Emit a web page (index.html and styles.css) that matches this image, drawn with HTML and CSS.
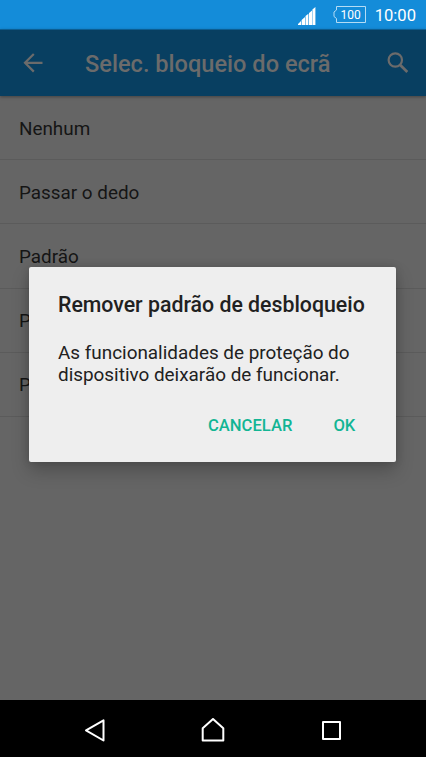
FILE: index.html
```html
<!DOCTYPE html>
<html lang="pt">
<head>
<meta charset="utf-8">
<title>Selec. bloqueio do ecrã</title>
<link rel="stylesheet" href="styles.css">
</head>
<body>
<div class="phone">
  <div class="status">
    <svg class="signal" width="18" height="18" viewBox="0 0 18 18"><path d="M0 18V17L3 14V18zM3.600 18V13L7 10V18zM7.500 18V9L10.400 6.800V18zM11 18V6L14 3.400V18zM14.400 18V2.500L17.400 0V18z" fill="#fff"/></svg>
    <div class="battery">
      <svg width="33" height="17" viewBox="0 0 33 17"><path d="M3.500 .5H32.500V16.500H3.500V12.500L1 10.500V6L3.500 4z" fill="none" stroke="#b4dcf5"/></svg>
      <span class="level">100</span>
    </div>
    <span class="clock">10:00</span>
  </div>
  <header class="appbar">
    <svg class="back" width="20" height="20" viewBox="0 0 20 20"><path d="M19.500 9.800H2.500M10.800 1L2 9.800L10.800 18.600" fill="none" stroke="#6b6b6b" stroke-width="2.200"/></svg>
    <h1>Selec. bloqueio do ecrã</h1>
    <svg class="search" width="22" height="22" viewBox="0 0 22 22"><circle cx="8.300" cy="8" r="6.700" fill="none" stroke="#6b6b6b" stroke-width="2.200"/><path d="M13.200 13L20.300 20" stroke="#6b6b6b" stroke-width="2.700"/></svg>
  </header>
  <main class="content">
    <ul class="list">
      <li>Nenhum</li>
      <li>Passar o dedo</li>
      <li>Padrão</li>
      <li>P</li>
      <li>P</li>
    </ul>
  </main>
  <nav class="nav">
    <svg width="24" height="24" viewBox="0 0 24 24"><path d="M21.500 2.300V22.500L4 12.400z"/></svg>
    <svg width="24" height="24" viewBox="0 0 24 24"><path d="M1.700 22.500V10.300L12 1L22.300 10.300V22.500z"/></svg>
    <svg width="24" height="24" viewBox="0 0 24 24"><path d="M3 4H20V21H3z"/></svg>
  </nav>
  <section class="dialog" role="dialog">
    <h2>Remover padrão de desbloqueio</h2>
    <p>As funcionalidades de proteção do<br>dispositivo deixarão de funcionar.</p>
    <div class="actions"><button>CANCELAR</button><button>OK</button></div>
  </section>
</div>
</body>
</html>
```
FILE: styles.css
```css
* { box-sizing: border-box; margin: 0; padding: 0; }
body { font-family: Roboto, "Liberation Sans", sans-serif; background: #656565; }
.phone { position: relative; width: 426px; height: 757px; overflow: hidden; display: flex; flex-direction: column; }
.status { height: 29px; flex: none; background: #148cd9; color: #fff; display: flex; justify-content: flex-end; align-items: center; padding-right: 10px; }
.signal { margin: 3px 17px 0 0; }
.battery { position: relative; width: 33px; height: 17px; margin-right: 9px; }
.battery svg { display: block; }
.level { position: absolute; inset: 1px 0 0 3px; text-align: center; font-size: 12px; line-height: 17px; }
.clock { font-size: 16.600px; line-height: 29px; padding-top: 2px; }
.appbar { height: 67px; flex: none; background: #083f61; border-top: 1px solid #0b5e93; color: #6b6b6b; display: flex; align-items: center; padding: 0 17px 0 23px; box-shadow: 0 1px 3px rgba(0,0,0,.35); z-index: 1; }
.appbar h1 { font-size: 23.600px; font-weight: 500; line-height: 28px; margin: 2px 0 0 42px; white-space: nowrap; }
.search { margin-left: auto; }
.content { flex: 1; background: #656565; }
.list { list-style: none; }
.list li { height: 64.200px; padding: 2px 19px 0; border-bottom: 1px solid #5b5b5b; display: flex; align-items: center; font-size: 18.860px; color: #151515; }
.nav { height: 57px; flex: none; background: #000; display: flex; justify-content: space-between; align-items: center; padding: 3px 82px 0; }
.nav svg { fill: none; stroke: #fff; stroke-width: 2; stroke-linejoin: round; }
.dialog { position: absolute; left: 29.400px; top: 267px; width: 367px; height: 195.400px; z-index: 2; background: #eee; border-radius: 2px; padding: 25px 28.600px 0; color: #212121; box-shadow: 0 9px 18px rgba(0,0,0,.22), 0 0 8px rgba(0,0,0,.15); }
.dialog h2 { font-size: 21.300px; line-height: 26px; font-weight: 500; white-space: nowrap; }
.dialog p { font-size: 18.900px; line-height: 22px; margin-top: 24px; white-space: nowrap; }
.actions { display: flex; justify-content: flex-end; gap: 41px; margin-top: 30px; padding-right: 12.500px; }
.actions button { border: 0; background: none; font: 500 16.600px/20px Roboto, sans-serif; color: #12b594; }
```
